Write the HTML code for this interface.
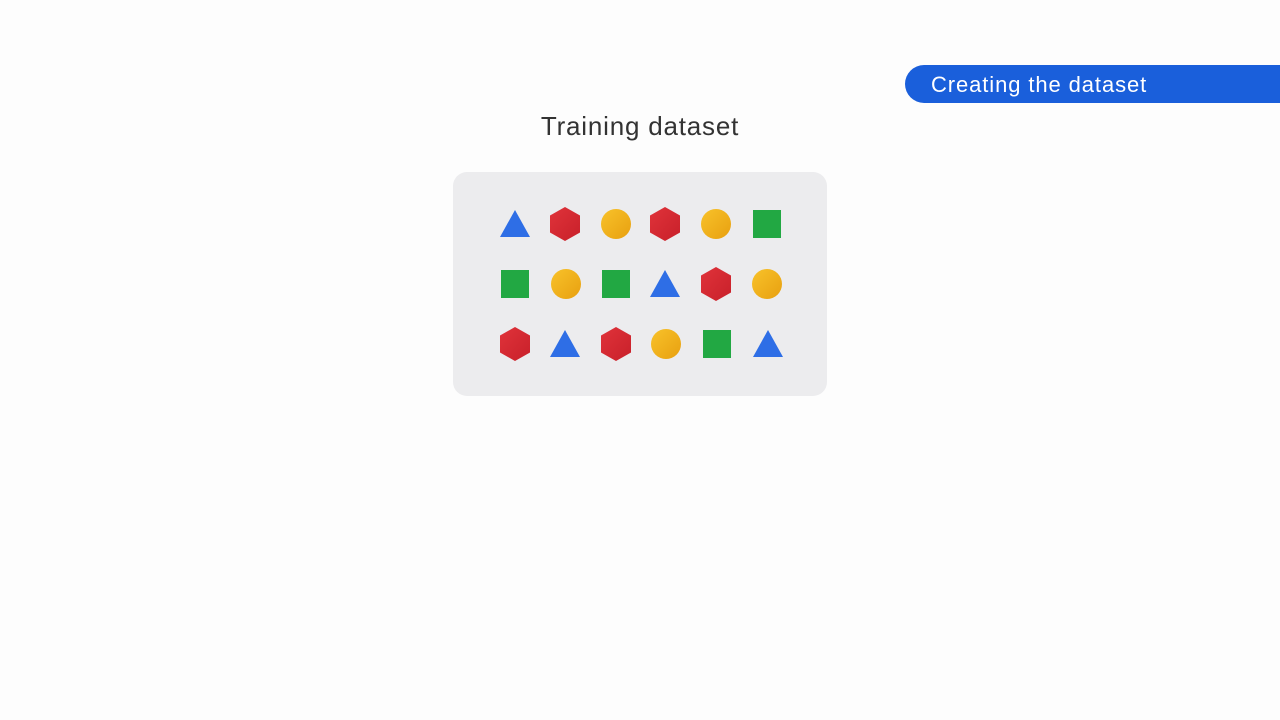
<!DOCTYPE html>
<html><head><style>
body{margin:0;width:1280px;height:720px;background:#fdfdfd;position:relative;overflow:hidden;font-family:"Liberation Sans",sans-serif}
.pill{position:absolute;left:905px;top:65px;width:400px;height:38px;background:#1a5fdb;border-radius:19px;color:#fff;font-size:22px;letter-spacing:0.9px;line-height:40px;padding-left:26px;box-sizing:border-box}
.title{position:absolute;left:0;width:1280px;top:111px;text-align:center;font-size:26px;letter-spacing:0.8px;color:#333}
.box{position:absolute;left:453px;top:172px;width:374px;height:224px;background:#ececee;border-radius:14px}
</style></head><body>
<div class="pill">Creating the dataset</div>
<div class="title">Training dataset</div>
<div class="box"></div>
<svg width="1280" height="720" style="position:absolute;left:0;top:0">
<defs>
<linearGradient id="y" x1="0" y1="0" x2="1" y2="1"><stop offset="0" stop-color="#f8c22a"/><stop offset="1" stop-color="#e8a010"/></linearGradient>
<linearGradient id="r" x1="0" y1="0" x2="1" y2="1"><stop offset="0" stop-color="#e0333a"/><stop offset="1" stop-color="#c8202a"/></linearGradient>
<symbol id="T" viewBox="-15 -15 30 30" overflow="visible"><polygon points="0,-14 15,13 -15,13" fill="#2e6ee6"/></symbol>
<symbol id="H" viewBox="-15 -15 30 30" overflow="visible"><polygon points="0,-17 15,-8.5 15,8.5 0,17 -15,8.5 -15,-8.5" fill="url(#r)"/></symbol>
<symbol id="C" viewBox="-15 -15 30 30" overflow="visible"><circle r="15" fill="url(#y)"/></symbol>
<symbol id="S" viewBox="-15 -15 30 30" overflow="visible"><rect x="-14" y="-14" width="28" height="28" fill="#22a843"/></symbol>
</defs>
<g>
<use href="#T" x="500" y="209" width="30" height="30"/>
<use href="#H" x="550" y="209" width="30" height="30"/>
<use href="#C" x="601" y="209" width="30" height="30"/>
<use href="#H" x="650" y="209" width="30" height="30"/>
<use href="#C" x="701" y="209" width="30" height="30"/>
<use href="#S" x="752" y="209" width="30" height="30"/>

<use href="#S" x="500" y="269" width="30" height="30"/>
<use href="#C" x="551" y="269" width="30" height="30"/>
<use href="#S" x="601" y="269" width="30" height="30"/>
<use href="#T" x="650" y="269" width="30" height="30"/>
<use href="#H" x="701" y="269" width="30" height="30"/>
<use href="#C" x="752" y="269" width="30" height="30"/>

<use href="#H" x="500" y="329" width="30" height="30"/>
<use href="#T" x="550" y="329" width="30" height="30"/>
<use href="#H" x="601" y="329" width="30" height="30"/>
<use href="#C" x="651" y="329" width="30" height="30"/>
<use href="#S" x="702" y="329" width="30" height="30"/>
<use href="#T" x="753" y="329" width="30" height="30"/>
</g>
</svg>
</body></html>
